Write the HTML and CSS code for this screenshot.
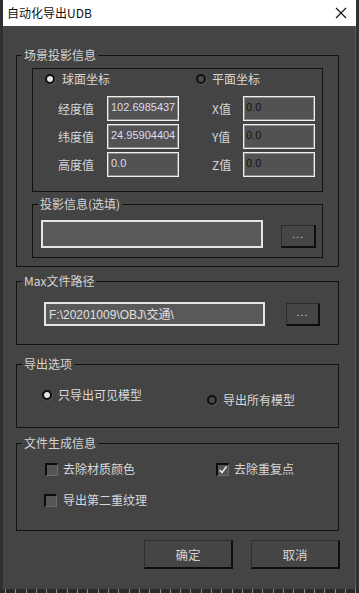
FILE: index.html
```html
<!DOCTYPE html>
<html lang="zh-CN">
<head>
    <meta charset="UTF-8">
    <meta name="viewport" content="width=device-width, initial-scale=1.0">
    <title>自动化导出UDB</title>
    <link rel="stylesheet" href="styles.css">
</head>
<body>
    <div class="dialog">
        <div class="titlebar">
            <span class="title">自动化导出UDB</span>
            <svg class="close" width="12" height="12" viewBox="0 0 12 12">
                <path d="M1 1 L11 11 M11 1 L1 11" stroke="#111" stroke-width="1.1" fill="none"/>
            </svg>
        </div>

        <div class="content">
            <div class="group group-scene">
                <div class="group-title">场景投影信息</div>

                <div class="coord-box">
                    <div class="radio-row">
                        <label class="radio-item sphere"><span class="radio checked"></span>球面坐标</label>
                        <label class="radio-item"><span class="radio"></span>平面坐标</label>
                    </div>
                    <div class="coord-grid">
                        <span class="field-label">经度值</span>
                        <input class="text-box" type="text" value="102.6985437">
                        <span></span>
                        <span class="field-label">X值</span>
                        <input class="text-box disabled" type="text" value="0.0">

                        <span class="field-label">纬度值</span>
                        <input class="text-box" type="text" value="24.95904404">
                        <span></span>
                        <span class="field-label">Y值</span>
                        <input class="text-box disabled" type="text" value="0.0">

                        <span class="field-label">高度值</span>
                        <input class="text-box" type="text" value="0.0">
                        <span></span>
                        <span class="field-label">Z值</span>
                        <input class="text-box disabled" type="text" value="0.0">
                    </div>
                </div>

                <div class="group group-proj">
                    <div class="group-title">投影信息(选填)</div>
                    <div class="path-row proj-row">
                        <input class="text-box proj-input" type="text" value="">
                        <button class="browse">...</button>
                    </div>
                </div>
            </div>

            <div class="group group-outer group-max">
                <div class="group-title">Max文件路径</div>
                <div class="path-row max-row">
                    <input class="text-box max-input" type="text" value="F:\20201009\OBJ\交通\">
                    <button class="browse">...</button>
                </div>
            </div>

            <div class="group group-outer group-export">
                <div class="group-title">导出选项</div>
                <div class="export-row">
                    <label class="radio-item visible-only"><span class="radio checked"></span>只导出可见模型</label>
                    <label class="radio-item all-models"><span class="radio"></span>导出所有模型</label>
                </div>
            </div>

            <div class="group group-outer group-files">
                <div class="group-title">文件生成信息</div>
                <div class="check-row first">
                    <label class="check-item left"><span class="check"></span>去除材质颜色</label>
                    <label class="check-item right"><span class="check checked">
                        <svg width="10" height="10" viewBox="0 0 10 10"><path d="M1.5 5 L4 7.5 L8.5 1.5" stroke="#e6e6e6" stroke-width="1.6" fill="none"/></svg>
                    </span>去除重复点</label>
                </div>
                <div class="check-row second">
                    <label class="check-item left second-box"><span class="check"></span>导出第二重纹理</label>
                </div>
            </div>

            <div class="actions">
                <button class="action">确定</button>
                <button class="action">取消</button>
            </div>
        </div>
    </div>
    <div class="ruler"></div>
</body>
</html>
```

FILE: styles.css
```css
body {
    margin: 0;
    padding: 0;
    background-color: #303030;
    font-family: "Noto Sans CJK SC", "Liberation Sans", sans-serif;
    font-size: 12px;
    color: #d8d8d8;
    overflow: hidden;
}

.dialog {
    margin-left: 3px;
    width: 352px;
    height: 589px;
    background-color: #444444;
    box-shadow: 1px 0 0 #5a5a5a;
}

.titlebar {
    height: 26px;
    width: 353px;
    background: #ffffff;
    display: flex;
    align-items: center;
    justify-content: space-between;
    box-sizing: border-box;
    padding: 0 9px 0 4px;
}

.title {
    color: #111;
    font-size: 12px;
    line-height: 16px;
}

.content {
    padding-top: 29px;
}

/* group boxes */
.group {
    border: 1px solid #121212;
    box-sizing: border-box;
}

.group-title {
    display: table;
    margin: -9px 0 0 5px;
    padding: 0 2px;
    line-height: 16px;
    background: #444444;
    color: #d4d4d4;
}

.group-scene {
    margin-left: 13px;
    width: 323px;
    padding-bottom: 8px;
}

.group-outer {
    margin-left: 13px;
    width: 323px;
}

.coord-box {
    margin: 5px 0 0 15px;
    width: 291px;
    border: 1px solid #121212;
    box-sizing: border-box;
    padding: 2px 0 14px 0;
}

.radio-row {
    display: flex;
    height: 16px;
}

.radio-item {
    display: flex;
    align-items: center;
    gap: 7px;
    line-height: 16px;
    height: 16px;
    white-space: nowrap;
}

.radio-row .sphere {
    margin-left: 12px;
    width: 151px;
}

.radio-row .radio-item + .radio-item {
    gap: 6px;
}

.radio {
    width: 10px;
    height: 10px;
    box-sizing: border-box;
    border-radius: 50%;
    border: 2px solid #101010;
    background: #4a4a4a;
    box-shadow: 1px 1px 0 #585858;
    flex: none;
}

.radio.checked {
    background: radial-gradient(circle, #e8e8e8 0 2.5px, #9a9a9a 3.5px);
}

.coord-grid {
    display: grid;
    grid-template-columns: 49px 72px 33px 31px 72px;
    grid-auto-rows: 25px;
    row-gap: 3px;
    margin-top: 9px;
    padding-left: 25px;
    align-items: center;
}

.field-label {
    color: #d6d6d6;
    white-space: nowrap;
}

.text-box {
    box-sizing: border-box;
    width: 72px;
    height: 25px;
    margin: 0;
    padding: 0 0 4px 3px;
    border: 1px solid #f0f0f0;
    box-shadow: inset 0 0 0 1px #8a8a8a;
    background: #525252;
    color: #dcdcf0;
    font-family: "Liberation Sans", sans-serif;
    font-size: 11px;
    outline: none;
}

.text-box.disabled {
    color: #141414;
    padding-left: 2px;
}

/* projection / path rows */
.group-proj {
    margin: 12px 0 0 15px;
    width: 291px;
    padding-bottom: 9px;
}

.path-row {
    display: flex;
    align-items: center;
}

.proj-row {
    margin: 8px 0 0 8px;
}

.proj-input {
    width: 222px;
    height: 28px;
    border: 2px solid #e4e4e4;
    box-shadow: none;
    background: #595959;
}

.browse {
    box-sizing: border-box;
    width: 35px;
    height: 23px;
    margin-left: 18px;
    margin-top: 4px;
    padding: 0 0 4px 0;
    background: #454545;
    border: 1px solid #2c2c2c;
    border-right: 2px solid #0e0e0e;
    border-bottom: 2px solid #0e0e0e;
    color: #c8c8c8;
    font-family: "Liberation Sans", sans-serif;
    font-size: 11px;
    letter-spacing: 1px;
}

.group-max {
    margin-top: 14px;
    padding-bottom: 18px;
}

.max-row {
    margin: 13px 0 0 27px;
}

.max-input {
    width: 221px;
    height: 24px;
    padding: 0 0 1px 3px;
    border: 2px solid #e4e4e4;
    box-shadow: none;
    background: #595959;
    color: #e0e0e0;
    font-family: "Liberation Sans", "Noto Sans CJK SC", sans-serif;
    font-size: 12px;
}

.max-row .browse {
    width: 34px;
    margin-left: 21px;
    margin-top: 0;
}

/* export options */
.group-export {
    margin-top: 19px;
    padding-bottom: 19px;
}

.export-row {
    display: flex;
    align-items: flex-start;
}

.export-row .radio-item {
    gap: 6px;
}

.visible-only {
    margin: 15px 0 0 25px;
    width: 165px;
}

.all-models {
    margin-top: 20px;
}

/* file info */
.group-files {
    margin-top: 15px;
    padding-bottom: 23px;
}

.check-row {
    display: flex;
    height: 16px;
}

.check-row.first {
    margin-top: 9px;
}

.check-row.second {
    margin-top: 15px;
}

.check-item {
    display: flex;
    align-items: center;
    gap: 5px;
    white-space: nowrap;
}

.check-item.left {
    margin-left: 28px;
    width: 171px;
}

.check-item.second-box {
    margin-left: 27px;
    gap: 6px;
}

.check {
    width: 13px;
    height: 13px;
    box-sizing: border-box;
    border: 2px solid #0c0c0c;
    border-right: 1px solid #6a6a6a;
    border-bottom: 1px solid #6a6a6a;
    background: #555555;
    display: flex;
    align-items: center;
    justify-content: center;
    flex: none;
    margin-top: 3px;
}

.check svg {
    display: block;
}

/* bottom buttons */
.actions {
    display: flex;
    justify-content: flex-end;
    gap: 18px;
    margin-top: 9px;
    padding-right: 15px;
}

.action {
    box-sizing: border-box;
    width: 89px;
    height: 29px;
    background: #454545;
    border: 1px solid #2e2e2e;
    border-right: 2px solid #0e0e0e;
    border-bottom: 2px solid #0e0e0e;
    color: #d4d4d4;
    font-family: "Noto Sans CJK SC", sans-serif;
    font-size: 12.5px;
    padding: 0;
}

.ruler {
    height: 4px;
    background-color: #2a2a2a;
    background-image: repeating-linear-gradient(90deg, transparent 0 5px, #8a8a8a 5px 6px, transparent 6px 10.3px);
}
```
